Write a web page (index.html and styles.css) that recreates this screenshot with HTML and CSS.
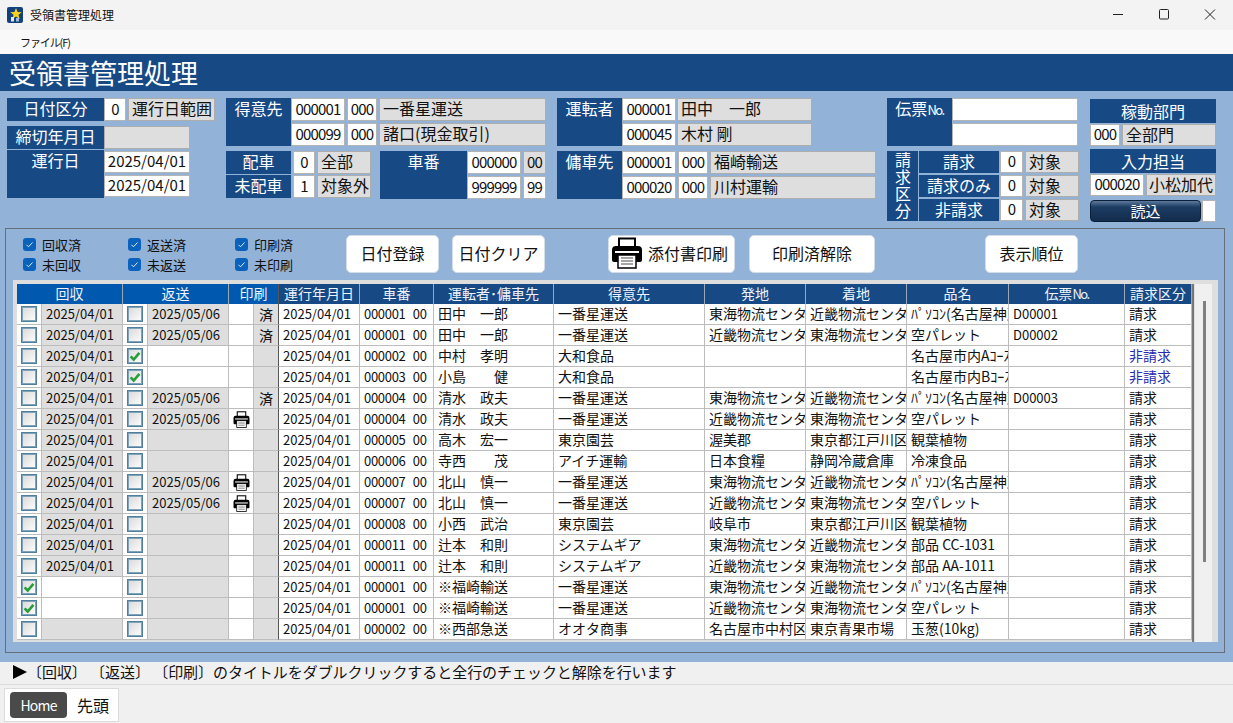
FILE: index.html
```html
<!DOCTYPE html>
<html lang="ja">
<head>
  <meta charset="UTF-8">
  <meta name="viewport" content="width=device-width, initial-scale=1.0">
  <title>受領書管理処理</title>
  <link rel="stylesheet" href="styles.css">
</head>
<body>

  <svg class="defs" xmlns="http://www.w3.org/2000/svg">
    <symbol id="printer" viewBox="0 0 32 32">
      <rect x="8" y="1.5" width="16" height="10" fill="#fff" stroke="#000" stroke-width="2"/>
      <path d="M5 9h22a4 4 0 0 1 4 4v10a2 2 0 0 1-2 2H3a2 2 0 0 1-2-2V13a4 4 0 0 1 4-4z" fill="#000"/>
      <rect x="4" y="14" width="24" height="2" fill="#fff"/>
      <rect x="7" y="18" width="18" height="13" fill="#fff" stroke="#000" stroke-width="1.5"/>
      <path d="M10 21h12M10 24h12M10 27h12" stroke="#888" stroke-width="1.5"/>
    </symbol>
    <symbol id="tick" viewBox="0 0 16 16">
      <path d="M3 8.5l3.5 3.5L13 4.5" fill="none" stroke="#2a9d3a" stroke-width="3"/>
    </symbol>
    <symbol id="minitick" viewBox="0 0 13 13">
      <path d="M3.5 6.8l2 2 4-4.3" fill="none" stroke="#dbe9f8" stroke-width="1"/>
    </symbol>
  </svg>

  <div class="titlebar">
    <svg class="logo" viewBox="0 0 16 16">
      <rect width="16" height="16" rx="2" fill="#14407c"/>
      <polygon points="9,1 10.6,5 14.8,5.2 11.5,7.8 12.6,12 9,9.6 5.4,12 6.5,7.8 3.2,5.2 7.4,5" fill="#f4d21f"/>
      <rect x="4" y="10" width="3" height="4.5" fill="#dfe8f4"/>
      <rect x="9" y="11" width="3" height="3.5" fill="#9fb8d8"/>
    </svg>
    <span class="titlebar-text">受領書管理処理</span>
    <div class="winbtns">
      <svg viewBox="0 0 46 30"><path d="M18 14.5h10" stroke="#222" fill="none"/></svg>
      <svg viewBox="0 0 46 30"><rect x="18.5" y="9.5" width="9" height="9.5" rx="1" stroke="#222" fill="none"/></svg>
      <svg viewBox="0 0 46 30"><path d="M18 9.5l10 10M28 9.5l-10 10" stroke="#222" fill="none"/></svg>
    </div>
  </div>

  <div class="menubar">ファイル(F)</div>

  <div class="banner">受領書管理処理</div>

  <div class="form">
    <div class="col col1">
      <div class="row">
        <div class="lbl w97">日付区分</div>
        <div class="fld w22 ctr num">0</div>
        <div class="ro w87 gapl2">運行日範囲</div>
      </div>
      <div class="row mt5">
        <div class="lbl w97">締切年月日</div>
        <div class="ro w86"></div>
      </div>
      <div class="row mt1">
        <div class="lbl lbl-top w97 h48">運行日</div>
        <div class="pair mt1">
          <div class="fld w86 h22 ctr dt">2025/04/01</div>
          <div class="fld w86 h22 ctr dt">2025/04/01</div>
        </div>
      </div>
    </div>

    <div class="col col2">
      <div class="row">
        <div class="lbl lbl-top w65 h48">得意先</div>
        <div class="pair">
          <div class="row g2">
            <div class="fld w54 ctr num">000001</div>
            <div class="fld w30 ctr num">000</div>
            <div class="ro w167">一番星運送</div>
          </div>
          <div class="row g2">
            <div class="fld w54 ctr num">000099</div>
            <div class="fld w30 ctr num">000</div>
            <div class="ro w167">諸口(現金取引)</div>
          </div>
        </div>
      </div>
      <div class="row mt5">
        <div class="pair g1">
          <div class="row g2">
            <div class="lbl w65">配車</div>
            <div class="fld w22 ctr num">0</div>
            <div class="ro w54">全部</div>
          </div>
          <div class="row g2">
            <div class="lbl w65">未配車</div>
            <div class="fld w22 ctr num">1</div>
            <div class="ro w54">対象外</div>
          </div>
        </div>
        <div class="lbl lbl-top w88 h48 ml9">車番</div>
        <div class="pair">
          <div class="row g2">
            <div class="fld w54 ctr num">000000</div>
            <div class="ro w23 ctr num nopad">00</div>
          </div>
          <div class="row g2">
            <div class="fld w54 ctr num">999999</div>
            <div class="fld w23 ctr num">99</div>
          </div>
        </div>
      </div>
    </div>

    <div class="col col3">
      <div class="row">
        <div class="lbl lbl-top w65 h48">運転者</div>
        <div class="pair">
          <div class="row g1px">
            <div class="fld w54 ctr num">000001</div>
            <div class="ro w135">田中　一郎</div>
          </div>
          <div class="row g1px">
            <div class="fld w54 ctr num">000045</div>
            <div class="ro w135">木村 剛</div>
          </div>
        </div>
      </div>
      <div class="row mt5">
        <div class="lbl lbl-top w65 h48">傭車先</div>
        <div class="pair">
          <div class="row g2">
            <div class="fld w54 ctr num">000001</div>
            <div class="fld w30 ctr num">000</div>
            <div class="ro w166">福崎輸送</div>
          </div>
          <div class="row g2">
            <div class="fld w54 ctr num">000020</div>
            <div class="fld w30 ctr num">000</div>
            <div class="ro w166">川村運輸</div>
          </div>
        </div>
      </div>
    </div>

    <div class="col col4">
      <div class="row">
        <div class="lbl lbl-top w65 h48">伝票<span class="no">No.</span></div>
        <div class="pair">
          <div class="fld w126"></div>
          <div class="fld w126"></div>
        </div>
      </div>
      <div class="row mt5">
        <div class="lbl lbl-v">請求区分</div>
        <div class="pair billing">
          <div class="row g1px">
            <div class="lbl w80 h22">請求</div>
            <div class="fld w23 h22 ctr num">0</div>
            <div class="ro w54 h22 ml1">対象</div>
          </div>
          <div class="row g1px">
            <div class="lbl w80 h22">請求のみ</div>
            <div class="fld w23 h22 ctr num">0</div>
            <div class="ro w54 h22 ml1">対象</div>
          </div>
          <div class="row g1px">
            <div class="lbl w80 h22">非請求</div>
            <div class="fld w23 h22 ctr num">0</div>
            <div class="ro w54 h22 ml1">対象</div>
          </div>
        </div>
      </div>
    </div>

    <div class="col col5">
      <div class="lbl head">稼動部門</div>
      <div class="row g2">
        <div class="fld w30 h22 ctr num">000</div>
        <div class="ro w94 h22">全部門</div>
      </div>
      <div class="lbl head mt3">入力担当</div>
      <div class="row g2">
        <div class="fld w54 h22 ctr num">000020</div>
        <div class="ro w70 h22 nopad ctr">小松加代</div>
      </div>
      <div class="row read-row">
        <button class="btn-read">読込</button>
        <div class="fld read-box"></div>
      </div>
    </div>
  </div>

  <div class="panel">
    <div class="toolbar">
      <div class="checks w105">
        <label class="chk"><svg class="mini"><use href="#minitick"/></svg>回収済</label>
        <label class="chk"><svg class="mini"><use href="#minitick"/></svg>未回収</label>
      </div>
      <div class="checks w107">
        <label class="chk"><svg class="mini"><use href="#minitick"/></svg>返送済</label>
        <label class="chk"><svg class="mini"><use href="#minitick"/></svg>未返送</label>
      </div>
      <div class="checks w111">
        <label class="chk"><svg class="mini"><use href="#minitick"/></svg>印刷済</label>
        <label class="chk"><svg class="mini"><use href="#minitick"/></svg>未印刷</label>
      </div>
      <button class="btn w93">日付登録</button>
      <button class="btn w93 ml13">日付クリア</button>
      <button class="btn btn-print ml63"><svg class="print-big"><use href="#printer"/></svg>添付書印刷</button>
      <button class="btn w126 ml14">印刷済解除</button>
      <button class="btn w93 ml110">表示順位</button>
    </div>

    <div class="grid-box">
      <table class="grid">
        <colgroup>
          <col class="c25"><col class="c81"><col class="c25"><col class="c81"><col class="c25"><col class="c25">
          <col class="c81"><col class="c74"><col class="c120"><col class="c151"><col class="c101"><col class="c101">
          <col class="c102"><col class="c116"><col class="c67">
        </colgroup>
        <thead>
          <tr>
            <th colspan="2" class="bright">回収</th>
            <th colspan="2" class="bright">返送</th>
            <th colspan="2" class="bright split">印刷</th>
            <th>運行年月日</th>
            <th>車番</th>
            <th>運転者･傭車先</th>
            <th>得意先</th>
            <th>発地</th>
            <th>着地</th>
            <th>品名</th>
            <th>伝票<span class="no">No.</span></th>
            <th>請求区分</th>
          </tr>
        </thead>
        <tbody>
          <tr>
            <td class="c"><span class="cb"></span></td><td class="g d">2025/04/01</td>
            <td class="c"><span class="cb"></span></td><td class="g d">2025/05/06</td>
            <td></td><td class="g c split">済</td>
            <td class="d">2025/04/01</td><td class="d pre">000001  00</td>
            <td>田中　一郎</td><td>一番星運送</td><td>東海物流センター</td><td>近畿物流センター</td>
            <td>ﾊﾟｿｺﾝ(名古屋神戸)</td><td class="d">D00001</td><td>請求</td>
          </tr>
          <tr>
            <td class="c"><span class="cb"></span></td><td class="g d">2025/04/01</td>
            <td class="c"><span class="cb"></span></td><td class="g d">2025/05/06</td>
            <td></td><td class="g c split">済</td>
            <td class="d">2025/04/01</td><td class="d pre">000001  00</td>
            <td>田中　一郎</td><td>一番星運送</td><td>近畿物流センター</td><td>東海物流センター</td>
            <td>空パレット</td><td class="d">D00002</td><td>請求</td>
          </tr>
          <tr>
            <td class="c"><span class="cb"></span></td><td class="g d">2025/04/01</td>
            <td class="c"><span class="cb"><svg><use href="#tick"/></svg></span></td><td></td>
            <td></td><td class="g c split"></td>
            <td class="d">2025/04/01</td><td class="d pre">000002  00</td>
            <td>中村　孝明</td><td>大和食品</td><td></td><td></td>
            <td>名古屋市内Aｺｰｽ</td><td></td><td class="blue">非請求</td>
          </tr>
          <tr>
            <td class="c"><span class="cb"></span></td><td class="g d">2025/04/01</td>
            <td class="c"><span class="cb"><svg><use href="#tick"/></svg></span></td><td></td>
            <td></td><td class="g c split"></td>
            <td class="d">2025/04/01</td><td class="d pre">000003  00</td>
            <td>小島　　健</td><td>大和食品</td><td></td><td></td>
            <td>名古屋市内Bｺｰｽ</td><td></td><td class="blue">非請求</td>
          </tr>
          <tr>
            <td class="c"><span class="cb"></span></td><td class="g d">2025/04/01</td>
            <td class="c"><span class="cb"></span></td><td class="g d">2025/05/06</td>
            <td></td><td class="g c split">済</td>
            <td class="d">2025/04/01</td><td class="d pre">000004  00</td>
            <td>清水　政夫</td><td>一番星運送</td><td>東海物流センター</td><td>近畿物流センター</td>
            <td>ﾊﾟｿｺﾝ(名古屋神戸)</td><td class="d">D00003</td><td>請求</td>
          </tr>
          <tr>
            <td class="c"><span class="cb"></span></td><td class="g d">2025/04/01</td>
            <td class="c"><span class="cb"></span></td><td class="g d">2025/05/06</td>
            <td class="c"><svg class="print-small"><use href="#printer"/></svg></td><td class="g c split"></td>
            <td class="d">2025/04/01</td><td class="d pre">000004  00</td>
            <td>清水　政夫</td><td>一番星運送</td><td>近畿物流センター</td><td>東海物流センター</td>
            <td>空パレット</td><td></td><td>請求</td>
          </tr>
          <tr>
            <td class="c"><span class="cb"></span></td><td class="g d">2025/04/01</td>
            <td class="c"><span class="cb"></span></td><td class="g"></td>
            <td></td><td class="g c split"></td>
            <td class="d">2025/04/01</td><td class="d pre">000005  00</td>
            <td>高木　宏一</td><td>東京園芸</td><td>渥美郡</td><td>東京都江戸川区</td>
            <td>観葉植物</td><td></td><td>請求</td>
          </tr>
          <tr>
            <td class="c"><span class="cb"></span></td><td class="g d">2025/04/01</td>
            <td class="c"><span class="cb"></span></td><td class="g"></td>
            <td></td><td class="g c split"></td>
            <td class="d">2025/04/01</td><td class="d pre">000006  00</td>
            <td>寺西　　茂</td><td>アイチ運輸</td><td>日本食糧</td><td>静岡冷蔵倉庫</td>
            <td>冷凍食品</td><td></td><td>請求</td>
          </tr>
          <tr>
            <td class="c"><span class="cb"></span></td><td class="g d">2025/04/01</td>
            <td class="c"><span class="cb"></span></td><td class="g d">2025/05/06</td>
            <td class="c"><svg class="print-small"><use href="#printer"/></svg></td><td class="g c split"></td>
            <td class="d">2025/04/01</td><td class="d pre">000007  00</td>
            <td>北山　慎一</td><td>一番星運送</td><td>東海物流センター</td><td>近畿物流センター</td>
            <td>ﾊﾟｿｺﾝ(名古屋神戸)</td><td></td><td>請求</td>
          </tr>
          <tr>
            <td class="c"><span class="cb"></span></td><td class="g d">2025/04/01</td>
            <td class="c"><span class="cb"></span></td><td class="g d">2025/05/06</td>
            <td class="c"><svg class="print-small"><use href="#printer"/></svg></td><td class="g c split"></td>
            <td class="d">2025/04/01</td><td class="d pre">000007  00</td>
            <td>北山　慎一</td><td>一番星運送</td><td>近畿物流センター</td><td>東海物流センター</td>
            <td>空パレット</td><td></td><td>請求</td>
          </tr>
          <tr>
            <td class="c"><span class="cb"></span></td><td class="g d">2025/04/01</td>
            <td class="c"><span class="cb"></span></td><td class="g"></td>
            <td></td><td class="g c split"></td>
            <td class="d">2025/04/01</td><td class="d pre">000008  00</td>
            <td>小西　武治</td><td>東京園芸</td><td>岐阜市</td><td>東京都江戸川区</td>
            <td>観葉植物</td><td></td><td>請求</td>
          </tr>
          <tr>
            <td class="c"><span class="cb"></span></td><td class="g d">2025/04/01</td>
            <td class="c"><span class="cb"></span></td><td class="g"></td>
            <td></td><td class="g c split"></td>
            <td class="d">2025/04/01</td><td class="d pre">000011  00</td>
            <td>辻本　和則</td><td>システムギア</td><td>東海物流センター</td><td>近畿物流センター</td>
            <td>部品 CC-1031</td><td></td><td>請求</td>
          </tr>
          <tr>
            <td class="c"><span class="cb"></span></td><td class="g d">2025/04/01</td>
            <td class="c"><span class="cb"></span></td><td class="g"></td>
            <td></td><td class="g c split"></td>
            <td class="d">2025/04/01</td><td class="d pre">000011  00</td>
            <td>辻本　和則</td><td>システムギア</td><td>近畿物流センター</td><td>東海物流センター</td>
            <td>部品 AA-1011</td><td></td><td>請求</td>
          </tr>
          <tr>
            <td class="c"><span class="cb"><svg><use href="#tick"/></svg></span></td><td></td>
            <td class="c"><span class="cb"></span></td><td class="g"></td>
            <td></td><td class="g c split"></td>
            <td class="d">2025/04/01</td><td class="d pre">000001  00</td>
            <td>※福崎輸送</td><td>一番星運送</td><td>東海物流センター</td><td>近畿物流センター</td>
            <td>ﾊﾟｿｺﾝ(名古屋神戸)</td><td></td><td>請求</td>
          </tr>
          <tr>
            <td class="c"><span class="cb"><svg><use href="#tick"/></svg></span></td><td></td>
            <td class="c"><span class="cb"></span></td><td class="g"></td>
            <td></td><td class="g c split"></td>
            <td class="d">2025/04/01</td><td class="d pre">000001  00</td>
            <td>※福崎輸送</td><td>一番星運送</td><td>近畿物流センター</td><td>東海物流センター</td>
            <td>空パレット</td><td></td><td>請求</td>
          </tr>
          <tr>
            <td class="c"><span class="cb"></span></td><td class="g"></td>
            <td class="c"><span class="cb"></span></td><td class="g"></td>
            <td></td><td class="g c split"></td>
            <td class="d">2025/04/01</td><td class="d pre">000002  00</td>
            <td>※西部急送</td><td>オオタ商事</td><td>名古屋市中村区</td><td>東京青果市場</td>
            <td>玉葱(10kg)</td><td></td><td>請求</td>
          </tr>
        </tbody>
      </table>
      <div class="scroll"><div class="thumb"></div></div>
    </div>
  </div>

  <div class="hint">
    <span class="arrow"></span>
    <span>〔回収〕 〔返送〕 〔印刷〕のタイトルをダブルクリックすると全行のチェックと解除を行います</span>
  </div>

  <div class="bottom">
    <div class="nav">
      <button class="btn-home">Home</button>
      <span class="nav-text">先頭</span>
    </div>
  </div>

</body>
</html>
```

FILE: styles.css
```css
body {
  margin: 0;
  height: 723px;
  overflow: hidden;
  display: flex;
  flex-direction: column;
  font-family: "Noto Sans CJK JP", "Noto Sans", sans-serif;
  background: #92b2d8;
  color: #111;
}

.defs {
  display: none;
}

/* window chrome */
.titlebar {
  height: 30px;
  flex: none;
  display: flex;
  align-items: center;
  background: #f3f3f3;
}

.logo {
  width: 16px;
  height: 16px;
  margin-left: 7px;
  margin-right: 7px;
}

.titlebar-text {
  font-size: 12px;
  margin-bottom: 1px;
}

.winbtns {
  margin-left: auto;
  display: flex;
}

.winbtns svg {
  width: 46px;
  height: 30px;
}

.menubar {
  height: 24px;
  flex: none;
  background: #f9f9f9;
  font-size: 11px;
  letter-spacing: -1.1px;
  line-height: 24px;
  padding-left: 20px;
}

.banner {
  height: 37px;
  flex: none;
  background: #174a85;
  color: #fff;
  font-size: 27px;
  line-height: 37px;
  padding-left: 9px;
}

/* search form */
.form {
  height: 130px;
  flex: none;
  padding: 7px 0 0 7px;
  display: flex;
}

.col {
  display: flex;
  flex-direction: column;
}

.col1 { width: 208px; margin-right: 11px; }
.col2 { width: 320px; margin-right: 11px; }
.col3 { width: 319px; margin-right: 11px; }
.col4 { width: 191px; margin-right: 12px; }
.col5 { width: 126px; padding-top: 1px; }

.row {
  display: flex;
}

.pair {
  display: flex;
  flex-direction: column;
  gap: 2px;
}

.g1 { gap: 1px; }
.g2 { gap: 2px; }
.g1px { gap: 1px; }
.mt1 { margin-top: 1px; }
.mt3 { margin-top: 3px; }
.mt5 { margin-top: 5px; }
.ml1 { margin-left: 1px; }
.ml9 { margin-left: 9px; }
.ml13 { margin-left: 13px; }
.ml14 { margin-left: 14px; }
.ml63 { margin-left: 63px; }
.ml110 { margin-left: 110px; }
.gapl2 { margin-left: 2px; }

.lbl, .fld, .ro {
  box-sizing: border-box;
  height: 23px;
  font-size: 16px;
  line-height: 19px;
  white-space: nowrap;
}

.lbl {
  background: #174a85;
  color: #fff;
  text-align: center;
  line-height: 21px;
}

.lbl-top {
  height: 48px;
}

.lbl-v {
  width: 31px;
  height: 70px;
  margin-right: 1px;
  line-height: 31px;
  writing-mode: vertical-rl;
  text-align: center;
  letter-spacing: 1px;
}

.head {
  height: 24px;
  line-height: 24px;
  margin-bottom: 1px;
}

.fld {
  background: #fff;
  border: 1px solid #b4b4b4;
}

.ro {
  background: #dedede;
  border: 1px solid #adadad;
  padding-left: 3px;
}

.nopad { padding-left: 0; }
.ctr { text-align: center; }

.num {
  font-size: 15px;
  letter-spacing: -0.8px;
}

.dt {
  font-size: 15px;
}

.no {
  font-size: 13px;
  letter-spacing: -1.5px;
}

.h22 { height: 22px; line-height: 18px; }
.lbl.h22 { line-height: 20px; }
.h48 { height: 48px; }
.w22 { width: 22px; }
.w23 { width: 23px; }
.w30 { width: 30px; }
.w54 { width: 54px; }
.w65 { width: 65px; }
.w70 { width: 70px; }
.w80 { width: 80px; }
.w86 { width: 86px; }
.w87 { width: 87px; }
.w88 { width: 88px; }
.w93 { width: 93px; }
.w94 { width: 94px; }
.w97 { width: 97px; }
.w105 { width: 105px; }
.w107 { width: 107px; }
.w111 { width: 111px; }
.w126 { width: 126px; }
.w135 { width: 135px; }
.w166 { width: 166px; }
.w167 { width: 167px; }

.read-row {
  margin-top: 4px;
  gap: 1px;
}

.btn-read {
  width: 111px;
  height: 22px;
  padding: 0;
  border: 1px solid #0c1f38;
  border-radius: 4px;
  background: linear-gradient(#5d7a9c 0, #1d3c63 30%, #122c4d 100%);
  color: #fff;
  font-family: inherit;
  font-size: 15px;
  line-height: 20px;
}

.read-box {
  width: 14px;
  height: 22px;
}

/* list panel */
.panel {
  box-sizing: border-box;
  height: 425px;
  flex: none;
  margin: 0 8px 0 5px;
  border: 1px solid #66707c;
  padding: 0 6px 0 7px;
}

.toolbar {
  height: 51px;
  display: flex;
  align-items: center;
  padding-left: 10px;
  padding-bottom: 1px;
  box-sizing: border-box;
}

.checks {
  display: flex;
  flex-direction: column;
  gap: 2px;
  flex: none;
  margin-top: 1px;
}

.chk {
  display: flex;
  align-items: center;
  height: 18px;
  font-size: 13px;
}

.mini {
  width: 13px;
  height: 13px;
  margin-right: 6px;
  background: #0a62bd;
  border-radius: 3px;
}

.btn {
  box-sizing: border-box;
  height: 38px;
  flex: none;
  padding: 0 0 2px;
  background: #fff;
  border: 1px solid #d4dde8;
  border-radius: 5px;
  font-family: inherit;
  font-size: 16px;
  color: #111;
}

.btn-print {
  width: 127px;
  display: flex;
  align-items: center;
  padding-left: 2px;
}

.print-big {
  width: 32px;
  height: 32px;
  margin-right: 5px;
}

.print-small {
  width: 17px;
  height: 17px;
  display: block;
  margin: 0 auto;
}

.grid-box {
  height: 362px;
  display: flex;
  box-sizing: border-box;
  background: #dedede;
  padding: 4px 6px 0 4px;
}

.grid {
  width: 1175px;
  height: 356px;
  table-layout: fixed;
  border-collapse: separate;
  border-spacing: 0;
  background: #fff;
  flex: none;
}

.c25 { width: 25px; }
.c67 { width: 67px; }
.c74 { width: 74px; }
.c81 { width: 81px; }
.c101 { width: 101px; }
.c102 { width: 102px; }
.c116 { width: 116px; }
.c120 { width: 120px; }
.c151 { width: 151px; }

.grid th {
  height: 20px;
  box-sizing: border-box;
  padding: 0 0 1px;
  background: #174a85;
  color: #eef3fa;
  font-size: 14px;
  font-weight: normal;
  line-height: 19px;
  border-right: 1px solid #9aa8b8;
  white-space: nowrap;
}

.grid th.bright {
  background: #0159af;
}

.grid td {
  height: 21px;
  box-sizing: border-box;
  padding: 0 0 1px 4px;
  border-right: 1px solid #bdbdbd;
  border-bottom: 1px solid #bdbdbd;
  font-size: 14px;
  line-height: 19px;
  white-space: nowrap;
  overflow: hidden;
}

.grid td.c {
  padding: 0;
  text-align: center;
}

.grid td.g {
  background: #dedede;
}

.grid td.d {
  font-size: 13px;
}

.grid td.pre {
  white-space: pre;
  letter-spacing: -0.3px;
  word-spacing: 1px;
}

.grid td.blue {
  color: #2a2ab0;
}

.grid .split {
  border-right: 1px solid #555;
}

.cb {
  box-sizing: border-box;
  display: block;
  width: 16px;
  height: 16px;
  margin: 0 auto;
  border: 1px solid #4f7f9c;
  outline: 1px solid #7fa3b8;
  outline-offset: -2px;
  background: linear-gradient(135deg, #d8d8d8, #fff);
}

.cb svg {
  display: block;
  width: 14px;
  height: 14px;
}

.scroll {
  width: 26px;
  height: 358px;
  box-sizing: border-box;
  border-left: 2px solid #777;
  margin-left: 0;
  padding-left: 9px;
  background: linear-gradient(90deg, #dedede 1px, #f0f0f0 1px);
}

.thumb {
  width: 3px;
  height: 261px;
  margin-top: 17px;
  background: #808080;
}

/* footer */
.hint {
  box-sizing: border-box;
  height: 23px;
  flex: none;
  margin-top: 9px;
  padding-bottom: 3px;
  display: flex;
  align-items: center;
  background: #f0f0f0;
  border-bottom: 1px solid #dcdcdc;
  font-size: 15px;
  letter-spacing: -0.05px;
  line-height: 19px;
  white-space: nowrap;
}

.arrow {
  width: 0;
  height: 0;
  margin-left: 13px;
  border-left: 14px solid #000;
  border-top: 7.5px solid transparent;
  border-bottom: 7.5px solid transparent;
}

.bottom {
  flex: 1;
  background: #f0f0f0;
  padding: 3px 0 0 4px;
}

.nav {
  box-sizing: border-box;
  width: 115px;
  height: 34px;
  display: flex;
  align-items: center;
  background: #fff;
  border: 1px solid #dcdcdc;
  padding-left: 5px;
}

.btn-home {
  width: 57px;
  height: 26px;
  padding: 0;
  border: none;
  border-radius: 4px;
  background: #4a4a4a;
  color: #fff;
  font-family: inherit;
  font-size: 14px;
  letter-spacing: -0.8px;
}

.nav-text {
  margin-left: 10px;
  font-size: 16px;
}
```
